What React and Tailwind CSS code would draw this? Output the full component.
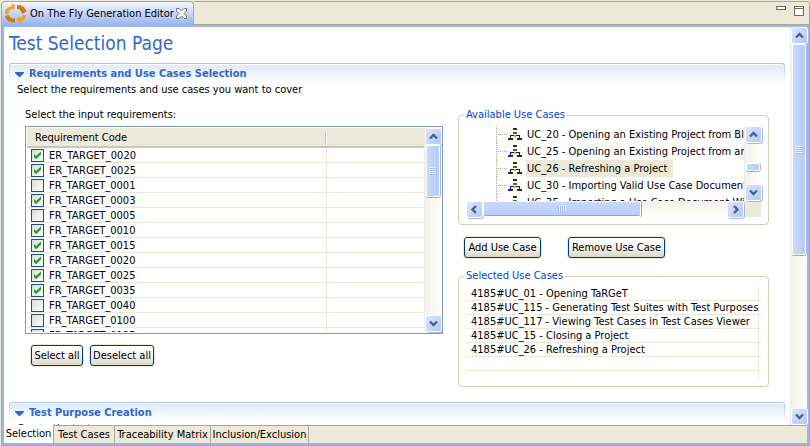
const requirements = [
  ["ER_TARGET_0020", true],
  ["ER_TARGET_0025", true],
  ["FR_TARGET_0001", false],
  ["FR_TARGET_0003", true],
  ["FR_TARGET_0005", false],
  ["FR_TARGET_0010", true],
  ["FR_TARGET_0015", true],
  ["FR_TARGET_0020", true],
  ["FR_TARGET_0025", true],
  ["FR_TARGET_0035", true],
  ["FR_TARGET_0040", false],
  ["FR_TARGET_0100", false],
  ["FR_TARGET_0105", false],
];

const available = [
  "UC_20 - Opening an Existing Project from Blank",
  "UC_25 - Opening an Existing Project from an Archive",
  "UC_26 - Refreshing a Project",
  "UC_30 - Importing Valid Use Case Documents",
  "UC_35 - Importing a Use Case Document With Errors",
];

const selected = [
  "4185#UC_01 - Opening TaRGeT",
  "4185#UC_115 - Generating Test Suites with Test Purposes",
  "4185#UC_117 - Viewing Test Cases in Test Cases Viewer",
  "4185#UC_15 - Closing a Project",
  "4185#UC_26 - Refreshing a Project",
  "",
];

const chevrons = {
  up: "M4 9.5 L7.5 6 L11 9.5",
  down: "M4 5.5 L7.5 9 L11 5.5",
  left: "M9 4 L5.5 7.5 L9 11",
  right: "M6 4 L9.5 7.5 L6 11",
};

function ScrollButton({ dir }) {
  return (
    <button
      type="button"
      aria-label={`Scroll ${dir}`}
      className="m-px size-[15px] shrink-0 rounded-[2px] bg-linear-to-br from-[#dbe6fe] to-[#b4c8f6] shadow-[0_0_0_1px_#ffffff,1px_1px_0_1px_#a5bce8]"
    >
      <svg viewBox="0 0 15 15" className="block size-[15px]" fill="none" stroke="#4d6185" strokeWidth="2.4">
        <path d={chevrons[dir]} />
      </svg>
    </button>
  );
}

function Grip({ vertical }) {
  return (
    <svg viewBox="0 0 8 8" className={vertical ? "size-2" : "size-2 rotate-90"} shapeRendering="crispEdges">
      <path d="M0 0.5h7M0 2.5h7M0 4.5h7M0 6.5h7" stroke="#eef4fe" />
      <path d="M1 1.5h7M1 3.5h7M1 5.5h7M1 7.5h7" stroke="#a3bdf6" />
    </svg>
  );
}

function VerticalScroll({ before, thumb, grip = true }) {
  return (
    <div className="flex w-[17px] shrink-0 flex-col border-l border-[#eeede5] bg-linear-to-r from-[#f3f1ec] to-[#fefefb]">
      <ScrollButton dir="up" />
      <div className={before} />
      <div
        className={`${thumb} mx-px flex shrink-0 items-center justify-center rounded-[2px] border border-white bg-linear-to-r from-[#c9d8fc] to-[#b9cbf9] shadow-[0_1px_0_#8ea9d8,1px_0_0_#a5bce8]`}
      >
        {grip && <Grip vertical />}
      </div>
      <div className="grow" />
      <ScrollButton dir="down" />
    </div>
  );
}

function SectionHeader({ children }) {
  return (
    <div className="rounded-t-[3px] bg-linear-to-b from-[#a6c4f4] to-white px-px pt-px">
      <h2 className="flex h-[19px] items-center gap-[5px] rounded-t-[2px] border-t border-white bg-linear-to-b from-[#e1eafc] to-white pl-[5px] text-[11px] leading-[14px] font-bold text-[#316ac5]">
        <svg viewBox="0 0 9 5" className="h-[5px] w-[9px]" fill="#316ac5">
          <path d="M0 0h9v1L5 5H4L0 1z" />
        </svg>
        {children}
      </h2>
    </div>
  );
}

function PushButton({ width, children }) {
  return (
    <button
      type="button"
      className={`${width} h-[21px] shrink-0 rounded-[3px] border border-[#003c74] bg-linear-to-b from-white via-[#f4f3ee] to-[#dcd7cb] text-center leading-[14px] whitespace-nowrap shadow-[0_0_0_1px_#ece9d8]`}
    >
      {children}
    </button>
  );
}

function Group({ title, children }) {
  return (
    <fieldset className="min-w-0 rounded-[4px] border border-[#d0d0bf] px-[5px]">
      <legend className="h-[14px] px-[2px] leading-[14px] text-[#0046d5]">{title}</legend>
      <div className="px-[2px]">{children}</div>
    </fieldset>
  );
}

function Check({ id, on }) {
  return (
    <span className="grid size-[13px] shrink-0">
      <input
        id={id}
        type="checkbox"
        defaultChecked={on}
        className="peer col-start-1 row-start-1 size-[13px] appearance-none border border-[#1c5180] bg-linear-to-br from-[#dcdcd7] to-white"
      />
      <svg
        viewBox="0 0 13 13"
        className="pointer-events-none invisible col-start-1 row-start-1 size-[13px] peer-checked:visible"
        fill="#21a121"
      >
        <path d="M3 5 L5 7 L10 2.5 V5.5 L5 10.2 L3 8z" />
      </svg>
    </span>
  );
}

function TreeIcon() {
  return (
    <svg viewBox="0 0 30 17" className="h-[17px] w-[30px] shrink-0" shapeRendering="crispEdges">
      <path d="M0.5 0v17M2 8.5h9" stroke="#aca899" strokeDasharray="1 1" />
      <g transform="translate(12 0)">
        <path d="M5 2h4v2H5zM0 12h5v2H0zM9 12h5v2H9z" fill="#333300" />
        <path d="M5 6h4v2H5z" fill="#009900" />
        <path d="M2.5 12V9.5h9V12" fill="none" stroke="#0000ff" />
        <path d="M6 9h2v2H6z" fill="#ff9933" />
      </g>
    </svg>
  );
}

function RequirementTable() {
  return (
    <div className="flex h-[208px] overflow-hidden border border-[#7f9db9] p-px">
      <div className="min-w-0 flex-1 overflow-hidden">
        <table className="w-full table-fixed border-separate border-spacing-0">
          <thead>
            <tr className="h-[20px] bg-[#ebeadb]">
              <th className="w-[300px] border-b-2 border-[#cbc7b8] p-0 text-left font-normal">
                <div className="flex h-[18px] items-center justify-between pt-[2px] pl-[8px]">
                  Requirement Code
                  <span className="h-[13px] w-[2px] border-r border-l border-r-white border-l-[#c7c5b2]" />
                </div>
              </th>
              <th className="border-b-2 border-[#cbc7b8] p-0" aria-label="Empty column" />
            </tr>
          </thead>
          <tbody>
            {requirements.map(([code, on]) => (
              <tr key={code} className="h-[15px]">
                <td className="border-r border-b border-[#ece9d8] p-0">
                  <div className="flex h-[14px] items-center gap-[5px] pl-[4px]">
                    <Check id={code} on={on} />
                    <label htmlFor={code} className="pt-[2px]">{code}</label>
                  </div>
                </td>
                <td className="border-b border-[#ece9d8] p-0" />
              </tr>
            ))}
          </tbody>
        </table>
      </div>
      <VerticalScroll before="h-0" thumb="h-[52px]" />
    </div>
  );
}

function UseCaseTree() {
  return (
    <div className="mt-1 mb-[7px] h-[91px]">
      <div className="flex h-[75px]">
        <ul className="min-w-0 flex-1 overflow-hidden pl-[30px]">
          {available.map((name) => (
            <li key={name} className="flex h-[17px] items-center whitespace-nowrap">
              <TreeIcon />
              <span className={name.startsWith("UC_26") ? "bg-[#ece9d8] pr-[6px] pl-px leading-[17px]" : "pl-px leading-[17px]"}>
                {name}
              </span>
            </li>
          ))}
        </ul>
        <VerticalScroll before="h-[20px]" thumb="h-[8px]" grip={false} />
      </div>
      <div className="flex h-4 bg-[#ece9d8] pr-[17px]">
        <div className="flex flex-1 bg-linear-to-b from-[#f3f1ec] to-[#fefefb]">
          <ScrollButton dir="left" />
          <div className="flex h-4 w-[158px] items-center justify-center rounded-[2px] border border-white bg-linear-to-b from-[#c9d8fc] to-[#b9cbf9] shadow-[inset_0_-1px_0_#8ea9d8,1px_0_0_#8ea9d8]">
            <Grip />
          </div>
          <div className="grow" />
          <ScrollButton dir="right" />
        </div>
      </div>
    </div>
  );
}

function SelectedList() {
  return (
    <div className="mt-1 mb-[7px] h-[92px] overflow-hidden">
      <ul>
        {selected.map((name) => (
          <li key={name} className="flex h-[14px] border-b border-[#ece9d8] pr-[2px]">
            <span className="flex-1 border-r border-[#ece9d8] pl-[5px] leading-[14px] whitespace-nowrap">{name}</span>
          </li>
        ))}
        <li className="flex h-[8px] pr-[2px]">
          <span className="flex-1 border-r border-[#ece9d8]" />
        </li>
      </ul>
    </div>
  );
}

function EditorTab() {
  return (
    <div className="flex">
      <div className="flex h-[24px] items-center rounded-t-[4px] border-t border-r border-[#aca899] bg-linear-to-b from-[#f4f6fd] to-[#99b4f0] pr-[6px] pl-[3px]">
        <svg viewBox="0 0 22 20" className="h-[20px] w-[22px]">
          <path d="M0 9 C0 5 3 2.500 7 2.500 L6 0.500 H10 L9 6 L6.500 5 C4 6 3.500 7.500 4 9 L2 11z" fill="#f9a01b" />
          <path d="M12 1 C17 1 20 3 20.500 6 L22 7 L17.500 10 L15.500 7 C15 5.500 14 5 12 5z" fill="#d07a12" />
          <path d="M21 11 C21 15 18.500 17 16 17.500 L16.500 20 L11 15.500 L15 12 L15.500 14 C17 13.500 17.500 12.500 18 11z" fill="#f9a01b" />
          <path d="M0 12 L4 11 C5 14 7 14.500 10 14.500 V18.500 C5 18.500 1.500 17 0 12z" fill="#d07a12" />
        </svg>
        <span className="ml-[3px] w-[146px] leading-[14px] whitespace-nowrap">On The Fly Generation Editor</span>
        <button type="button" aria-label="Close editor" className="size-[11px]">
          <svg viewBox="0 0 11 11" className="block size-[11px]" fill="#ffffff" stroke="#6e6e66">
            <path d="M0.500 0.500h2.500L5.500 3 8 0.500h2.500V3L8 5.500 10.500 8v2.500H8L5.500 8 3 10.500H0.500V8L3 5.500 0.500 3z" />
          </svg>
        </button>
      </div>
      <div className="flex h-[24px] flex-1 items-start justify-end gap-[8px] border-t border-b border-[#aca899] pt-[4px] pr-[5px]">
        <button type="button" aria-label="Minimize" className="h-[4px] w-[10px] border border-[#6e6e5a] bg-white" />
        <button type="button" aria-label="Maximize" className="flex h-[10px] w-[10px] items-start border border-[#6e6e5a] bg-white">
          <span className="block h-[2px] w-full border-b border-[#6e6e5a]" />
        </button>
      </div>
    </div>
  );
}

const pages = [
  ["Test Cases", "w-[61px]"],
  ["Traceability Matrix", "w-[96px]"],
  ["Inclusion/Exclusion", "w-[98px]"],
];

export default function App() {
  return (
    <div className="flex h-screen flex-col bg-[#ece9d8] pt-px pl-px font-['DejaVu_Sans_Condensed','DejaVu_Sans',sans-serif] text-[11px] leading-[14px] text-black">
      <div className="flex min-h-0 flex-1 flex-col rounded-t-[4px] border-r border-b border-l border-[#aca899]">
        <EditorTab />
        <div className="flex min-h-0 flex-1 flex-col border-2 border-[#99b4f0]">
          <div className="flex min-h-0 flex-1 bg-white">
            <main className="min-w-0 flex-1 overflow-hidden pr-[5px] pl-[5px]">
              <h1 className="flex h-9 items-center pb-1 text-[19px] leading-6 text-[#316ac5]">Test Selection Page</h1>
              <section className="pb-[15px]">
                <SectionHeader>Requirements and Use Cases Selection</SectionHeader>
                <p className="pl-[8px]">Select the requirements and use cases you want to cover</p>
                <div className="mt-[11px] flex gap-[15px] pr-4 pl-4">
                  <div className="min-w-0 flex-1">
                    <h3 className="mb-1">Select the input requirements:</h3>
                    <RequirementTable />
                    <div className="mt-[11px] flex gap-[7px] pl-[6px]">
                      <PushButton width="w-[52px]">Select all</PushButton>
                      <PushButton width="w-[64px]">Deselect all</PushButton>
                    </div>
                  </div>
                  <div className="w-[311px] shrink-0">
                    <Group title="Available Use Cases">
                      <UseCaseTree />
                    </Group>
                    <div className="mt-3 mb-[11px] flex gap-[27px] pl-[6px]">
                      <PushButton width="w-[77px]">Add Use Case</PushButton>
                      <PushButton width="w-[97px]">Remove Use Case</PushButton>
                    </div>
                    <Group title="Selected Use Cases">
                      <SelectedList />
                    </Group>
                  </div>
                </div>
              </section>
              <section>
                <SectionHeader>Test Purpose Creation</SectionHeader>
                <p className="pl-[8px]">Create the test purposes</p>
              </section>
            </main>
            <VerticalScroll before="h-0" thumb="h-[211px]" />
          </div>
          <nav className="flex h-[18px] shrink-0">
            <button type="button" className="w-[50px] border-r border-[#aca899] bg-white leading-[14px]">
              Selection
            </button>
            {pages.map(([name, width]) => (
              <button key={name} type="button" className={`${width} border-t border-r border-[#aca899] leading-[14px] whitespace-nowrap`}>
                {name}
              </button>
            ))}
            <div className="flex-1 border-t border-[#aca899]" />
          </nav>
        </div>
      </div>
    </div>
  );
}
